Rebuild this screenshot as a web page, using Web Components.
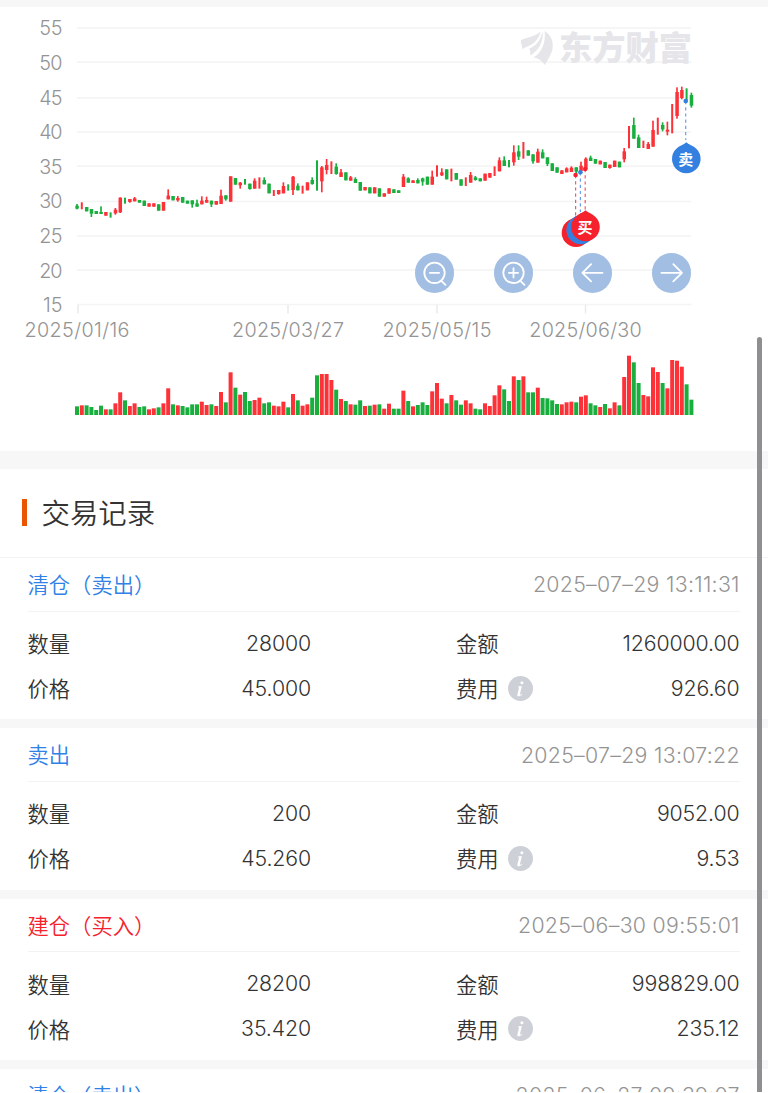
<!DOCTYPE html>
<html lang="zh-CN">
<head>
<meta charset="utf-8">
<title>交易记录</title>
<style>
  html, body { margin: 0; background: #fff; }
  body {
    height: 1093px;
    overflow: hidden;
    font-family: Inter, "Noto Sans CJK SC", sans-serif;
    color: #333;
  }
</style>
</head>
<body>
<trade-page>
  <stock-chart></stock-chart>
  <section-title>交易记录</section-title>
  <trade-record type="sell" time="2025–07–29 13:11:31" amount="28000" price="45.000" total="1260000.00" fee="926.60">清仓（卖出）</trade-record>
  <trade-record type="sell" time="2025–07–29 13:07:22" amount="200" price="45.260" total="9052.00" fee="9.53">卖出</trade-record>
  <trade-record type="buy" time="2025–06–30 09:55:01" amount="28200" price="35.420" total="998829.00" fee="235.12">建仓（买入）</trade-record>
  <trade-record type="sell" time="2025–06–27 09:39:07">清仓（卖出）</trade-record>
</trade-page>

<script>
const RED = "#fd3138";
const GREEN = "#18af3f";

// Volume bars, one per trading day: colour + top, measured down to a baseline of 195
const VOLUMES = `G169 R166 G166 G171 G180 G167 R178 G178 R160 R127 G151 R168 R160 G171 G169 R178
R175 G172 R160 R115 G163 R166 G168 G172 G163 G163 R155 R165 G163 R168 R126 G157 R67 G113 R134 G126
G153 R150 R143 G160 G157 R167 R169 R155 G172 R132 G151 R167 R163 G143 G76 R72 R72 R90 G119 R147
G153 R163 G164 G151 R168 G167 R164 G163 R176 R161 G176 G176 R122 G153 R169 G165 G157 G165 R124 R99
R146 G160 R135 G151 G164 R151 R160 G176 G178 R160 R168 R136 R106 G118 G153 R79 G90 R79 G127 G127
R113 G144 G145 G151 G162 R163 R157 R155 G157 R140 R136 G160 G166 R171 G162 R175 R157 G166 R81 R17
G37 G99 R135 R139 R52 R66 G99 R115 R30 R32 R50 G103 G149`.split(/\s+/);

// Candles: high,top,bottom,low. Two values = no body. Each block has its own vertical base.
const CANDLES = [
  { base: 420, rows: `G192,197,206,208 R187,208 G201,201,214,214 G207,207,221,231 G213,213,222,222
G199,216,222,222 R216,216,227,227 G217,233 R204,209,220,224 R172,173,217,219 G173,191 R177,177,186,188
R171,175,184,184 G180,180,188,188 G182,182,198,198 R190,190,200,200 R190,190,200,200 G193,193,212,212
R186,186,212,212 R148,167,178,178 G168,168,181,181 R168,174,181,185 G171,171,188,188 G182,182,191,191
G181,181,193,203 G179,190,200,200 R169,182,193,193 R170,180,188,188 G182,182,193,201 R183,183,194,194
R149,167,192,192 G166,166,178,182 R109,109,185,185 G114,114,134,134 R126,128,136,146 G117,134
G131,131,147,149 R115,122,146,146 R112,146 G112,120,133,133 G131,131,160,160 R150,168 R150,150,162,164
R127,138,160,160 G133,152 R108,110,150,165 G130,137,151,151 R137,161 R127,127,151,151 G112,120,132,134
G61,152 R78,82,124,157 R57,75,90,103 R64,102 G70,80,102,104 R87,97,111,111 G97,97,121,121
R108,112,122,122 G112,117,129,129 G126,126,152,152 R141,141,151,151 G142,142,160,160 R142,142,160,160
G145,145,170,170 R160,160,170,170 R145,145,161,161 G148,148,159,159 G151,151,159,159` },
  { base: 360, rows: `R162,170,201,201 G172,175,188,188 R181,181,189,189 G175,180,190,190 G173,175,185,197
G170,170,194,194 R152,170,194,194 R136,170 R145,157,166,168 G148,148,178,178 R146,184 G159,159,179,179
G178,178,197,197 R172,198 R156,165,188,188 G168,172,180,182 G175,175,184,184 R161,161,182,182
R159,159,173,173 R139,168 R112,121,154,154 G109,121,138,138 G120,142 R76,97,127,137 G76,94,110,120
R66,116 G91,91,107,107 G103,103,124,131 R86,95,128,128 G88,97,115,115 G112,112,132,138
G130,130,153,153 G142,142,158,158` },
  { base: 210, rows: `R301,301,312,312 R292,295,307,307 R289,293,306,306 G292,292,305,312 R275,287,303,303
R262,266,298,298 G257,263,273,273 G267,267,281,281 R272,272,283,283 G276,276,294,294 R284,284,294,296
R272,272,291,291 G275,275,292,292 R234,244,268,277 R168,235 G143,165,206,206 G194,202,234,234 R212,234
R216,222,237,237 R152,180,230,230 R143,194 G157,165,178,184 R155,179,185,196 R102,190 R52,66,138,146
R50,60,84,88 G55,95 G68,75,107,113` }
];

const colorOf = (code) => (code[0] === "R" ? RED : GREEN);

class TradePage extends HTMLElement {
  constructor() {
    super();
    this.attachShadow({ mode: "open" });
  }

  connectedCallback() {
    this.shadowRoot.innerHTML = `
      <style>
        :host {
          display: block;
          position: relative;
          width: 768px;
          height: 1092px;
          overflow: hidden;
          background: #fff;
        }
        .scrollbar {
          position: absolute;
          top: 337px;
          right: 6px;
          bottom: 0;
          width: 5px;
          border-radius: 3px 3px 0 0;
          background: #8f8f91;
        }
      </style>
      <slot></slot>
      <div class="scrollbar"></div>
    `;
  }
}

class ChartButton extends HTMLElement {
  static icons = {
    "zoom-out": `<circle cx="19.7" cy="20" r="10.3"/><path d="M15 20h9.4M26.4 28l4.4 4.2"/>`,
    "zoom-in": `<circle cx="19.7" cy="20" r="10.3"/><path d="M15 20h9.4M19.7 15.3v9.4M26.4 28l4.4 4.2"/>`,
    "left": `<path d="M9.5 20h20.3M18.3 11.3L9.5 20l8.8 8.7"/>`,
    "right": `<path d="M9.5 20h20.8M21.5 11.3l8.8 8.7-8.8 8.7"/>`
  };

  constructor() {
    super();
    this.attachShadow({ mode: "open" });
  }

  connectedCallback() {
    this.shadowRoot.innerHTML = `
      <style>
        :host { display: block; width: 39.6px; height: 39.6px; }
        button {
          display: block;
          width: 100%;
          height: 100%;
          padding: 0;
          border: 0;
          border-radius: 50%;
          background: rgba(154, 186, 225, 0.92);
        }
        svg { display: block; fill: none; stroke: #fff; stroke-width: 1.8; stroke-linecap: round; stroke-linejoin: round; }
      </style>
      <button><svg width="39.6" height="39.6" viewBox="0 0 40 40">${ChartButton.icons[this.getAttribute("icon")]}</svg></button>
    `;
  }
}

class StockChart extends HTMLElement {
  constructor() {
    super();
    this.attachShadow({ mode: "open" });
  }

  connectedCallback() {
    this.shadowRoot.innerHTML = `
      <style>
        :host {
          display: block;
          position: relative;
          height: 443.5px;
          border-top: 7px solid #f7f7f7;
          border-bottom: 18px solid #f7f7f7;
        }
        svg { display: block; }
        text { fill: #949494; font-size: 19.8px; font-weight: 300; }
        .logo { fill: #e5e5ea; font: 900 33.3px "Noto Sans CJK SC", sans-serif; }
        .pin { fill: #fff; font: 700 15px "Noto Sans CJK SC", sans-serif; }
        .tools {
          position: absolute;
          top: 246px;
          left: 414.7px;
          width: 276.6px;
          display: flex;
          justify-content: space-between;
        }
      </style>
      <svg width="768" height="443" viewBox="0 7 768 443">
        ${this.axes()}
        ${this.logo()}
        <g transform="scale(0.33333)">${this.candles()}</g>
        <g transform="translate(0 350) scale(0.33333)">${this.volumes()}</g>
        ${this.marks()}
      </svg>
      <div class="tools">
        <chart-button icon="zoom-out"></chart-button>
        <chart-button icon="zoom-in"></chart-button>
        <chart-button icon="left"></chart-button>
        <chart-button icon="right"></chart-button>
      </div>
    `;
  }

  axes() {
    const lines = [28, 62, 98, 132, 166, 201.5, 236, 270, 304.5];
    let out = "";
    lines.forEach((y, i) => {
      out += `<rect x="77" y="${y - 0.75}" width="614.5" height="1.5" fill="#f4f4f4"/>`;
      out += `<text x="62.5" y="${35.3 + i * 34.6}" text-anchor="end" textLength="${i === 8 ? 19.5 : 23.3}">${55 - i * 5}</text>`;
    });
    const dates = [["2025/01/16", 78, 77, 105], ["2025/03/27", 288, 288, 112], ["2025/05/15", 437, 437, 109], ["2025/06/30", 585.5, 585.5, 112.5]];
    for (const [label, tick, x, len] of dates) {
      out += `<rect x="${tick - 0.7}" y="305" width="1.4" height="8.5" fill="#e9e9e9"/>`;
      out += `<text x="${x}" y="336.5" text-anchor="middle" textLength="${len}">${label}</text>`;
    }
    return out;
  }

  logo() {
    return `
      <g fill="#e5e5ea">
        <path d="M520.7 40.5C526 37 534 37.5 540.5 31.5 539 39 534 44 528.5 46 526 47 524 47.5 522.5 49.5 522 46 521 43 520.7 40.5z"/>
        <path d="M542.3 31C544 42 538.5 50.5 530.3 55.5 530.5 53 530.2 50.5 529.3 48.5 536 46 541 40 542.3 31z"/>
        <path d="M544.7 31C551 35 554 42 552.3 50 550.5 56 547 61 545 65 542.5 62 539 58 533.5 57.5 541.5 53 546 43 544.7 31z"/>
      </g>
      <text class="logo" x="559" y="60" textLength="133">东方财富</text>
    `;
  }

  candles() {
    let out = "";
    let i = 0;
    for (const { base, rows } of CANDLES) {
      for (const row of rows.split(/\s+/)) {
        const v = row.slice(1).split(",").map(Number);
        const x = 231 + i * 14.4;
        const color = colorOf(row);
        const low = v[v.length - 1];
        const wick = v.length === 2 ? 6 : 5;
        out += `<rect x="${x - wick / 2}" y="${v[0] + base}" width="${wick}" height="${low - v[0]}" fill="${color}"/>`;
        if (v.length === 4) {
          out += `<rect x="${x - 5}" y="${v[1] + base}" width="10.5" height="${v[2] - v[1]}" fill="${color}"/>`;
        }
        i++;
      }
    }
    return out;
  }

  volumes() {
    return VOLUMES.map((code, i) => {
      const top = Number(code.slice(1));
      return `<rect x="${225 + i * 14.4}" y="${top}" width="12" height="${195 - top}" fill="${colorOf(code)}"/>`;
    }).join("");
  }

  marks() {
    const red = "#f5222d";
    const blue = "#3380e0";
    const dash = (x, y1, y2, c) => `
      <path d="M${x} ${y1}V${y2}" stroke="${c}" stroke-width="1.2" stroke-dasharray="3.2 3" opacity="0.75"/>
      <circle cx="${x}" cy="${y1}" r="2.3" fill="${c}"/>`;
    const pin = (x, y, c, label) => `
      <path transform="translate(${x} ${y})" fill="${c}" d="M0-16.7C2.5-14.5 5-13.7 7.6-12.1A14.3 14.3 0 1 1-7.6-12.1C-5-13.7-2.5-14.5 0-16.7z"/>
      ${label ? `<text class="pin" x="${x - 0.5}" y="${y + 5.6}" text-anchor="middle">${label}</text>` : ""}`;
    return dash(575.6, 175, 218, red) + dash(580.4, 172.3, 212, blue) + dash(585.2, 169, 211, red) + dash(685.7, 101, 140, blue)
      + pin(576, 232.7, red) + pin(580.7, 230, blue) + pin(585.5, 227, red, "买") + pin(686.3, 158.9, blue, "卖");
  }
}

class SectionTitle extends HTMLElement {
  constructor() {
    super();
    this.attachShadow({ mode: "open" });
  }

  connectedCallback() {
    this.shadowRoot.innerHTML = `
      <style>
        :host {
          display: flex;
          align-items: center;
          gap: 14.5px;
          box-sizing: border-box;
          height: 89.5px;
          padding-left: 22px;
          border-bottom: 1px solid #f3f3f3;
          font-size: 28.4px;
          font-weight: 350;
          line-height: 40px;
        }
        i { width: 5px; height: 27px; background: #ea5504; }
        span { padding-top: 2px; }
      </style>
      <i></i><span><slot></slot></span>
    `;
  }
}

class InfoIcon extends HTMLElement {
  constructor() {
    super();
    this.attachShadow({ mode: "open" });
  }

  connectedCallback() {
    this.shadowRoot.innerHTML = `
      <style>
        :host { display: block; width: 25px; height: 25px; margin-top: 1px; }
        svg { display: block; }
      </style>
      <svg width="25" height="25">
        <circle cx="12.5" cy="12.5" r="12.5" fill="#cdd0d6"/>
        <circle cx="13.9" cy="6.7" r="1.5" fill="#fff"/>
        <path d="M10 10.6L13.9 10 11.9 18.2C11.8 19 12.6 18.9 14 17.8L14.3 18.3C12.9 19.8 11.5 20.4 10.4 20.3 9.4 20.2 9.1 19.4 9.4 18.2L11 11.9C11.1 11.3 10.8 11.1 9.9 11.2z" fill="#fff"/>
      </svg>
    `;
  }
}

class TradeRecord extends HTMLElement {
  constructor() {
    super();
    this.attachShadow({ mode: "open" });
  }

  connectedCallback() {
    const get = (name) => this.getAttribute(name) || "";
    this.shadowRoot.innerHTML = `
      <style>
        :host {
          display: block;
          box-sizing: border-box;
          height: 170.4px;
          padding: 0 28.5px 0 27.5px;
          border-bottom: 9px solid #f7f7f7;
          font-size: 21.3px;
          font-weight: 350;
        }
        header {
          display: flex;
          justify-content: space-between;
          align-items: center;
          box-sizing: border-box;
          height: 53.6px;
          border-bottom: 1px solid #f3f3f3;
        }
        .type { color: #2f80e7; line-height: 30px; margin-top: 1px; }
        :host([type="buy"]) .type { color: #f5222d; }
        time { color: #949494; font-weight: 300; letter-spacing: 0.3px; margin-right: -0.3px; }
        .grid {
          display: grid;
          grid-template-columns: 120px 163.5px 1fr auto;
          grid-auto-rows: 45px;
          align-items: center;
          padding-top: 8.5px;
        }
        .num { text-align: right; letter-spacing: -0.12px; }
        .label { display: flex; align-items: center; gap: 9.5px; padding-left: 145px; }
      </style>
      <header><span class="type"><slot></slot></span><time>${get("time")}</time></header>
      ${get("amount") && `<div class="grid">
        <span>数量</span><span class="num">${get("amount")}</span>
        <span class="label">金额</span><span class="num">${get("total")}</span>
        <span>价格</span><span class="num">${get("price")}</span>
        <span class="label">费用<info-icon></info-icon></span><span class="num">${get("fee")}</span>
      </div>`}
    `;
  }
}

customElements.define("chart-button", ChartButton);
customElements.define("info-icon", InfoIcon);
customElements.define("stock-chart", StockChart);
customElements.define("section-title", SectionTitle);
customElements.define("trade-record", TradeRecord);
customElements.define("trade-page", TradePage);
</script>
</body>
</html>
